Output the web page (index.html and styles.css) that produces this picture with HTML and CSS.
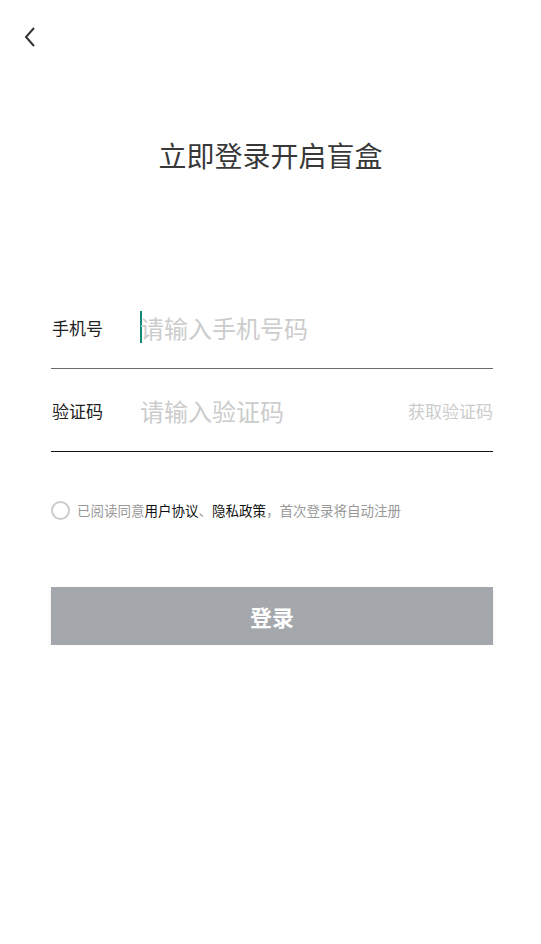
FILE: index.html
```html
<!DOCTYPE html>
<html lang="zh-CN">
<head>
    <meta charset="UTF-8">
    <meta name="viewport" content="width=device-width, initial-scale=1.0">
    <title>登录</title>
    <link rel="stylesheet" href="styles.css">
</head>
<body>
    <div class="top-bar">
        <svg class="back-icon" width="14" height="22" viewBox="0 0 14 22">
            <path d="M11 2 L3 11 L11 20" fill="none" stroke="#333" stroke-width="2"/>
        </svg>
    </div>

    <h1 class="title">立即登录开启盲盒</h1>

    <div class="form">
        <div class="field">
            <span class="field-label">手机号</span>
            <span class="cursor"></span>
            <span class="field-input">请输入手机号码</span>
        </div>
        <div class="field field-dark">
            <span class="field-label">验证码</span>
            <span class="field-input">请输入验证码</span>
            <span class="get-code">获取验证码</span>
        </div>

        <div class="agree">
            <span class="check"></span>
            <p class="agree-text">已阅读同意<b>用户协议</b>、<b>隐私政策</b>，首次登录将自动注册</p>
        </div>

        <button class="login-button">登录</button>
    </div>
</body>
</html>
```

FILE: styles.css
```css
body {
    margin: 0;
    padding: 0;
    background: #ffffff;
    font-family: 'Noto Sans CJK SC', 'Noto Sans', sans-serif;
    color: #333333;
}

.top-bar {
    height: 72px;
    padding-left: 23px;
    display: flex;
    align-items: flex-start;
}

.back-icon {
    margin-top: 26px;
}

.title {
    margin: 63px 0 0;
    text-align: center;
    font-size: 28px;
    font-weight: 400;
    line-height: 40px;
    color: #383838;
}

.form {
    margin: 0 48px 0 51px;
    padding-top: 111px;
}

.field {
    height: 82px;
    border-bottom: 1px solid #6b6b6b;
    display: flex;
    align-items: center;
    position: relative;
}

.field-dark {
    border-bottom-color: #111111;
}

.field-label {
    width: 88px;
    padding-left: 1px;
    font-size: 17px;
    color: #222222;
}

.cursor {
    width: 2px;
    height: 32px;
    margin-right: -2px;
    background: #0f8a74;
}

.field-input {
    flex: 1;
    font-size: 24px;
    color: #cccccc;
}

.get-code {
    font-size: 17px;
    color: #cccccc;
}

.agree {
    display: flex;
    align-items: center;
    margin-top: 48px;
}

.check {
    width: 15px;
    height: 15px;
    border: 2px solid #cccccc;
    border-radius: 50%;
    box-sizing: content-box;
}

.agree-text {
    margin: 0 0 0 7px;
    font-size: 13.5px;
    color: #999999;
}

.agree-text b {
    font-weight: 400;
    color: #111111;
}

.login-button {
    display: block;
    width: 100%;
    height: 58px;
    margin-top: 67px;
    border: none;
    background: #a4a7ab;
    color: #ffffff;
    font-family: inherit;
    font-size: 22px;
    font-weight: 700;
    box-shadow: 0 3px 3px rgba(0, 0, 0, 0.12);
}
```
